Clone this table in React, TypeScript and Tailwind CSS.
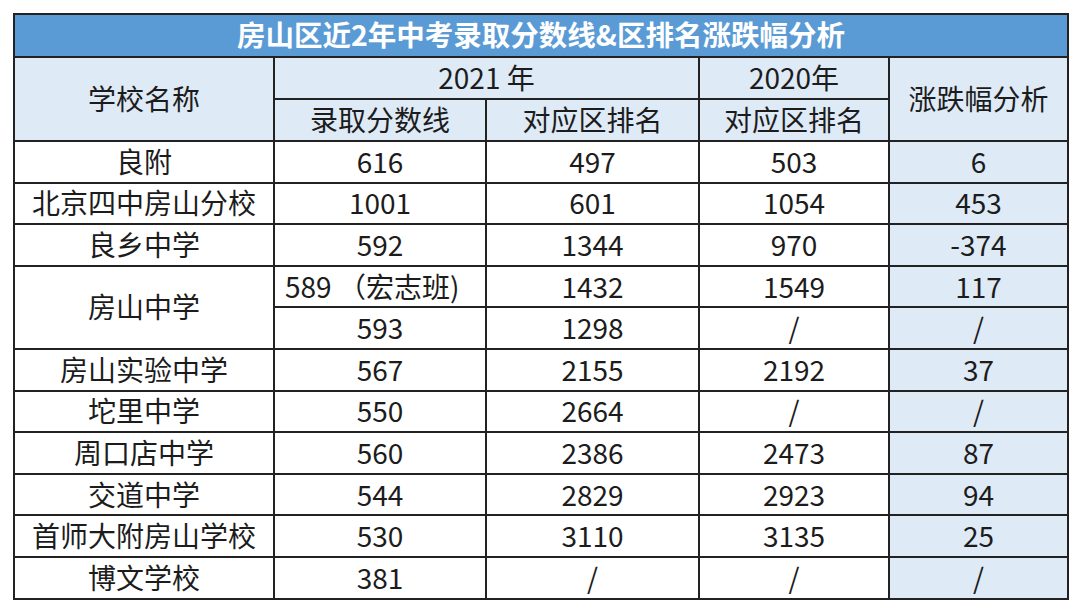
const rows: {name: string; score: string; rank21: string; rank20: string; diff: string}[] = [
  {name: '良附', score: '616', rank21: '497', rank20: '503', diff: '6'},
  {name: '北京四中房山分校', score: '1001', rank21: '601', rank20: '1054', diff: '453'},
  {name: '良乡中学', score: '592', rank21: '1344', rank20: '970', diff: '-374'},
];

const rowsAfter = [
  {name: '房山实验中学', score: '567', rank21: '2155', rank20: '2192', diff: '37'},
  {name: '坨里中学', score: '550', rank21: '2664', rank20: '/', diff: '/'},
  {name: '周口店中学', score: '560', rank21: '2386', rank20: '2473', diff: '87'},
  {name: '交道中学', score: '544', rank21: '2829', rank20: '2923', diff: '94'},
  {name: '首师大附房山学校', score: '530', rank21: '3110', rank20: '3135', diff: '25'},
  {name: '博文学校', score: '381', rank21: '/', rank20: '/', diff: '/'},
];

const cell = 'border-2 border-[#222] text-center align-middle p-0 pb-[2px]';
const bodyRow = 'h-[41.6px]';

function DataRow({r}: {r: (typeof rows)[number]}) {
  return (
    <tr className={bodyRow}>
      <td className={cell}>{r.name}</td>
      <td className={cell}>{r.score}</td>
      <td className={cell}>{r.rank21}</td>
      <td className={cell}>{r.rank20}</td>
      <td className={`${cell} bg-[#deeaf6]`}>{r.diff}</td>
    </tr>
  );
}

export default function App() {
  return (
    <div className="w-[1080px] h-[612px] bg-white pt-[13px] pl-[13px]">
      <table
        className="border-collapse table-fixed w-[1054px] text-[28px] leading-none text-[#1c1c1c]"
        style={{fontFamily: '"Noto Sans CJK SC", "Noto Sans", sans-serif'}}
      >
        <colgroup>
          <col className="w-[260px]" />
          <col className="w-[212px]" />
          <col className="w-[213px]" />
          <col className="w-[190px]" />
          <col className="w-[179px]" />
        </colgroup>
        <tbody>
          <tr className="h-[43px]">
            <td colSpan={5} className={`${cell} bg-[#5b9bd5] text-white font-bold text-[28.5px]`}>
              房山区近2年中考录取分数线&amp;区排名涨跌幅分析
            </td>
          </tr>
          <tr className="h-[42px] bg-[#deeaf6]">
            <td rowSpan={2} className={cell}>学校名称</td>
            <td colSpan={2} className={cell}>2021 年</td>
            <td className={cell}>2020年</td>
            <td rowSpan={2} className={cell}>涨跌幅分析</td>
          </tr>
          <tr className="h-[42px] bg-[#deeaf6]">
            <td className={cell}>录取分数线</td>
            <td className={cell}>对应区排名</td>
            <td className={cell}>对应区排名</td>
          </tr>
          {rows.map((r) => (
            <DataRow key={r.name} r={r} />
          ))}
          <tr className={bodyRow}>
            <td rowSpan={2} className={cell}>房山中学</td>
            <td className={`${cell} text-left pl-[10px] whitespace-nowrap`}>589 （宏志班)</td>
            <td className={cell}>1432</td>
            <td className={cell}>1549</td>
            <td className={`${cell} bg-[#deeaf6]`}>117</td>
          </tr>
          <tr className={bodyRow}>
            <td className={cell}>593</td>
            <td className={cell}>1298</td>
            <td className={cell}>/</td>
            <td className={`${cell} bg-[#deeaf6]`}>/</td>
          </tr>
          {rowsAfter.map((r) => (
            <DataRow key={r.name} r={r} />
          ))}
        </tbody>
      </table>
    </div>
  );
}
